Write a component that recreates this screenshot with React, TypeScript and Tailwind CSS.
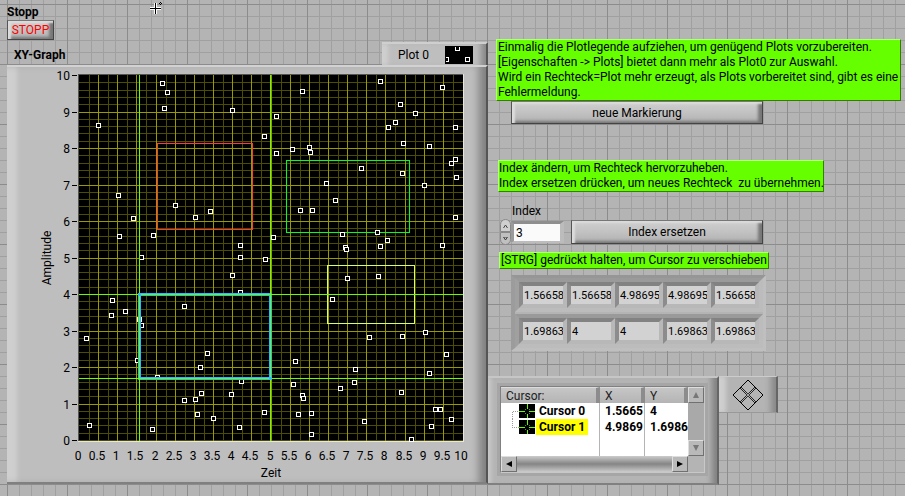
import type { ReactNode } from "react"
import clsx from "clsx"

const points = [
  [162, 83], [167, 92], [164, 108], [232, 110], [98, 125], [380, 81], [302, 91],
  [442, 87], [400, 104], [276, 116], [415, 113], [395, 122], [388, 127], [455, 127],
  [264, 136], [403, 143], [429, 146], [276, 153], [292, 149], [309, 147], [310, 152],
  [361, 168], [451, 163], [455, 159], [118, 195], [133, 218], [119, 236], [153, 235],
  [141, 257], [175, 205], [195, 217], [210, 211], [240, 245], [240, 257], [232, 275],
  [240, 292], [265, 259], [273, 237], [112, 300], [184, 306], [402, 173], [326, 183],
  [424, 185], [456, 177], [335, 200], [300, 210], [312, 210], [455, 217], [342, 234],
  [377, 232], [387, 240], [380, 246], [345, 247], [346, 249], [442, 245], [347, 278],
  [378, 276], [332, 299], [125, 311], [111, 315], [139, 319], [141, 325], [86, 338],
  [137, 360], [207, 353], [200, 367], [157, 377], [241, 381], [201, 393], [231, 394],
  [184, 400], [195, 399], [197, 414], [213, 418], [264, 412], [89, 425], [152, 429],
  [239, 427], [369, 337], [402, 336], [425, 332], [446, 354], [295, 361], [355, 369],
  [354, 382], [429, 373], [293, 384], [340, 388], [401, 392], [302, 395], [303, 398],
  [298, 414], [311, 413], [311, 434], [364, 421], [435, 409], [440, 409], [451, 419],
  [431, 426], [411, 439],
]

const xLabels = Array.from({ length: 21 }, (_, i) => i / 2)
const yLabels = Array.from({ length: 11 }, (_, i) => i)

const toX = (v: number) => Math.round(79 + v * 38.3)
const toY = (v: number) => Math.round(440 - v * 36.5)

const arrayRows = [
  ["1.56658", "1.56658", "4.98695", "4.98695", "1.56658"],
  ["1.69863", "4", "4", "1.69863", "1.69863"],
]

const cursors = [
  { name: "Cursor 0", x: "1.5665", y: "4", active: false, tree: "M1.5 16V8.5H8" },
  { name: "Cursor 1", x: "4.9869", y: "1.6986", active: true, tree: "M1.5 0v8.500H8" },
]

function Graph() {
  return (
    <svg
      viewBox="27 69 440 412"
      className="block h-auto w-full overflow-visible fill-black text-xs"
      shapeRendering="crispEdges"
      role="img"
      aria-label="XY-Graph"
    >
      <rect x="78" y="74" width="386" height="368" fill="#e6e6e6" />
      <rect x="78" y="74" width="385" height="367" fill="#555" />
      <rect x="79" y="75" width="384" height="366" fill="#000" />

      {/* minor grid */}
      {Array.from({ length: 20 }, (_, i) => (
        <rect key={i} x={toX(i / 2) + 10} y="75" width="1" height="366" fill="#4d4d00" />
      ))}
      {Array.from({ length: 50 }, (_, i) => (
        <rect key={i} x="79" y={toY(i / 5)} width="384" height="1" fill="#4d4d00" />
      ))}

      {/* major grid */}
      {xLabels.slice(1, 20).map((v) => (
        <rect key={v} x={toX(v)} y="75" width="1" height="366" fill="#999900" />
      ))}
      {yLabels.slice(1, 10).map((v) => (
        <rect key={v} x="79" y={toY(v)} width="384" height="1" fill="#999900" />
      ))}

      {/* marked rectangles */}
      <g fill="none">
        <rect x="157.5" y="143.5" width="95" height="86" stroke="#ff3b3b" />
        <rect x="286.5" y="160.5" width="123" height="72" stroke="#00ff21" />
        <rect x="327.5" y="265.5" width="87" height="58" stroke="#d9ff66" />
      </g>

      {points.map(([x, y], i) => (
        <rect key={i} x={x - 1.5} y={y - 1.5} width="4" height="4" fill="#000" stroke="#fff" />
      ))}

      <rect x="139.5" y="294.5" width="131" height="84" fill="none" stroke="#33b5ff" strokeWidth="3" />

      {/* cursor lines */}
      <g fill="#66ff00">
        <rect x="139" y="75" width="1" height="366" />
        <rect x="79" y="294" width="384" height="1" />
        <rect x="270" y="75" width="1" height="366" />
        <rect x="79" y="378" width="384" height="1" />
      </g>
      <rect x="138" y="293" width="3" height="3" fill="#33b5ff" />
      <rect x="269" y="377" width="3" height="3" fill="#33b5ff" />

      {yLabels.map((v) => (
        <g key={v}>
          <rect x="72" y={toY(v)} width="5" height="1" />
          <text x="70" y={toY(v) + 5} textAnchor="end">
            {v}
          </text>
        </g>
      ))}
      {xLabels.map((v) => (
        <text key={v} x={toX(v) - 1} y="460" textAnchor="middle">
          {v}
        </text>
      ))}
      <text x="271" y="477" textAnchor="middle">
        Zeit
      </text>
      <text transform="translate(51 258) rotate(-90)" textAnchor="middle">
        Amplitude
      </text>
    </svg>
  )
}

function Note({ children, className }: { children: ReactNode; className?: string }) {
  return (
    <p
      className={clsx(
        "border border-t-[#b3ff80] border-r-[#338000] border-b-[#338000] border-l-[#b3ff80] bg-[#66ff00] leading-[15px] whitespace-pre",
        className,
      )}
    >
      {children}
    </p>
  )
}

function PanelButton({ children, className }: { children: ReactNode; className?: string }) {
  return (
    <button
      type="button"
      className={clsx(
        "border border-t-[#777] border-r-[#444] border-b-[#444] border-l-[#555] bg-linear-to-b from-[#cfcfcf] via-[#c2c2c2] to-[#b0b0b0] text-center shadow-[inset_3px_2px_2px_#dcdcdc,inset_-4px_-2px_3px_#777]",
        className,
      )}
    >
      {children}
    </button>
  )
}

function ScrollButton({ label, d, muted }: { label: string; d: string; muted?: boolean }) {
  return (
    <button
      type="button"
      aria-label={label}
      className="flex size-4 shrink-0 items-center justify-center border border-t-[#dedede] border-r-[#707070] border-b-[#707070] border-l-[#dedede] bg-[#b9b9b9]"
    >
      <svg viewBox="0 0 8 8" className={clsx("size-2", muted ? "fill-[#777]" : "fill-black")}>
        <path d={d} />
      </svg>
    </button>
  )
}

function CursorGlyph({ tree }: { tree: string }) {
  return (
    <svg viewBox="0 0 24 16" className="ml-2.5 block h-4 w-6" shapeRendering="crispEdges">
      <path d={tree} fill="none" stroke="#999" strokeDasharray="1 1" />
      <rect x="8" y="1" width="16" height="14" fill="#000" />
      <path d="M8 8.500h6M18 8.500h6M16.500 1v5M16.500 11v4" stroke="#66ff00" fill="none" />
      <path d="M14 6h1v1h-1zM18 6h1v1h-1zM14 10h1v1h-1zM18 10h1v1h-1z" fill="#4d9900" />
    </svg>
  )
}

function CursorLegend() {
  const head =
    "h-4 border-t border-r-4 border-t-[#dcdcdc] border-r-[#8c8c8c] bg-linear-to-b from-[#c6c6c6] to-[#b4b4b4] p-0 text-left leading-[14px] font-normal text-[#222]"
  return (
    <section
      aria-label="Cursor"
      className="w-[231px] border-t-2 border-r-2 border-b-2 border-t-[#c6c6c6] border-r-[#666] border-b-[#808080] bg-[#b4b4b4] pt-2 pr-3 pb-2.5 pl-3 shadow-[inset_-9px_0_6px_-4px_#808080,inset_5px_0_4px_-2px_#cacaca]"
    >
      <div className="flex border border-t-[#808080] border-r-[#c8c8c8] border-b-[#c8c8c8] border-l-[#808080] shadow-[0_0_0_3px_#a6a6a6]">
        <div className="min-w-0 flex-1">
          <div className="h-[69px] overflow-hidden bg-white">
            <table className="w-full table-fixed border-separate border-spacing-0">
              <thead>
                <tr>
                  <th className={clsx(head, "w-[99px] pl-[5px]")}>Cursor:</th>
                  <th className={clsx(head, "w-[45px] pl-[5px]")}>X</th>
                  <th className={clsx(head, "pl-[5px]")}>Y</th>
                </tr>
              </thead>
              <tbody className="font-bold">
                {cursors.map((c) => (
                  <tr key={c.name}>
                    <td className="border-r border-[#b4b4b4] p-0">
                      <div className="flex h-4 items-center">
                        <CursorGlyph tree={c.tree} />
                        <span className={clsx("ml-px px-[3px] leading-4", c.active && "bg-[#ffff00]")}>
                          {c.name}
                        </span>
                      </div>
                    </td>
                    <td className="border-r border-[#b4b4b4] p-0 pl-[5px] leading-4">{c.x}</td>
                    <td className="p-0 pl-[5px] leading-4">{c.y}</td>
                  </tr>
                ))}
                <tr className="h-6">
                  <td className="border-r border-[#b4b4b4]" />
                  <td className="border-r border-[#b4b4b4]" />
                  <td />
                </tr>
              </tbody>
            </table>
          </div>
          <div className="flex">
            <ScrollButton label="Nach links" d="M7 1v6L1 4z" />
            <div className="flex-1 bg-linear-to-b from-[#cccccc] via-[#858585] to-[#cccccc]" />
            <ScrollButton label="Nach rechts" d="M1 1v6l6-3z" />
          </div>
        </div>
        <div className="flex h-[69px] flex-col justify-between bg-[#a9a9a9]">
          <ScrollButton label="Nach oben" d="M4 1l3 6H1z" muted />
          <ScrollButton label="Nach unten" d="M1 1h6L4 7z" muted />
        </div>
      </div>
    </section>
  )
}

export default function App() {
  return (
    <main className="relative min-h-screen overflow-hidden bg-[#b4b4b4] bg-[linear-gradient(#8c8c8c_1px,transparent_1px),linear-gradient(90deg,#8c8c8c_1px,transparent_1px),linear-gradient(#a0a0a0_1px,transparent_1px),linear-gradient(90deg,#a0a0a0_1px,transparent_1px)] bg-size-[60px_60px,60px_60px,12px_12px,12px_12px] bg-position-[7px_4px] font-['Roboto','Open_Sans',sans-serif] text-xs text-black">
      <svg viewBox="0 0 14 14" className="absolute top-0.5 left-[149px] size-3.5" shapeRendering="crispEdges">
        <path d="M6.5 1v11M1 6.5h11" stroke="#fff" strokeWidth="3" />
        <path d="M6.5 1v11M1 6.5h11" stroke="#000" />
        <path d="M11 0h1v1h-1zM10 1h1v1h-1zM12 1h1v1h-1zM11 2h1v1h-1z" />
      </svg>

      <div className="grid grid-cols-[minmax(0,488fr)_minmax(0,417fr)]">
        <div className="pl-[7px]">
          <div className="h-[42px] pt-1">
            <h2 className="leading-4 font-bold">Stopp</h2>
            <PanelButton className="block h-5 w-[47px] leading-[18px] text-[#ff0000]">STOPP</PanelButton>
          </div>

          <div className="flex h-[23px] items-end justify-between">
            <h2 className="pb-0.5 pl-[7px] leading-4 font-bold">XY-Graph</h2>
            <div className="flex h-[23px] w-[106px] items-center justify-between border-t-2 border-r-2 border-t-[#cfcfcf] border-r-[#555] bg-[#bebebe] pr-[13px] pl-4 shadow-[inset_-9px_0_6px_-4px_#888,inset_8px_0_4px_-2px_#cfcfcf]">
              <span>Plot 0</span>
              <svg viewBox="0 0 28 18" className="h-[18px] w-7" shapeRendering="crispEdges">
                <rect width="28" height="18" />
                <g fill="none" stroke="#fff">
                  <path d="M10.5 1v3.500h4V1" />
                  <path d="M1 11.500h2.500v4H1" />
                  <rect x="20.500" y="11.500" width="4" height="4" />
                </g>
              </svg>
            </div>
          </div>

          <section
            aria-label="XY-Graph"
            className="border-t-2 border-r-2 border-b-2 border-t-[#d2d2d2] border-r-[#555] border-b-[#808080] bg-[#bebebe] pt-0.5 pr-[19px] pb-px pl-5 shadow-[inset_-11px_0_8px_-4px_#808080,inset_12px_0_4px_-2px_#cfcfcf]"
          >
            <Graph />
          </section>
        </div>

        <div className="pt-[39px]">
          <div className="pl-2">
            <Note className="w-[405px] pl-px">
              Einmalig die Plotlegende aufziehen, um genügend Plots vorzubereiten.
              {"\n"}[Eigenschaften -&gt; Plots] bietet dann mehr als Plot0 zur Auswahl.
              {"\n"}Wird ein Rechteck=Plot mehr erzeugt, als Plots vorbereitet sind, gibt es eine
              {"\n"}Fehlermeldung.
            </Note>
            <PanelButton className="ml-[15px] block h-[23px] w-[252px]">neue Markierung</PanelButton>

            <Note className="mt-9 ml-0.5 w-[326px]">
              Index ändern, um Rechteck hervorzuheben.
              {"\n"}Index ersetzen drücken, um neues Rechteck{"  "}zu übernehmen.
            </Note>

            <label htmlFor="index" className="mt-[11px] block pl-4 leading-4">
              Index
            </label>
            <div className="mt-px flex h-6 items-center">
              <div className="ml-1 flex w-[11px] flex-col">
                <button
                  type="button"
                  aria-label="Index erhöhen"
                  className="flex h-[13px] items-center justify-center rounded-t-full border border-[#888] bg-[#cfcfcf]"
                >
                  <svg viewBox="0 0 5 4" className="h-1 w-[5px] fill-none stroke-[#444]">
                    <path d="M.5 4l2-3 2 3" />
                  </svg>
                </button>
                <button
                  type="button"
                  aria-label="Index verringern"
                  className="flex h-[13px] items-center justify-center rounded-b-full border border-[#888] bg-[#c0c0c0]"
                >
                  <svg viewBox="0 0 5 4" className="h-1 w-[5px] fill-none stroke-[#444]">
                    <path d="M.5 0h4l-2 3z" />
                  </svg>
                </button>
              </div>
              <input
                id="index"
                defaultValue="3"
                className="h-[22px] w-[53px] border-t-[3px] border-r-4 border-b-2 border-l-[3px] border-t-[#8e8e8e] border-r-[#bcbcbc] border-b-[#bcbcbc] border-l-[#9a9a9a] bg-[#fafafa] px-0.5"
              />
              <PanelButton className="ml-[7px] h-6 w-[192px]">Index ersetzen</PanelButton>
            </div>

            <Note className="mt-2 ml-[3px] w-[270px] pl-px">[STRG] gedrückt halten, um Cursor zu verschieben</Note>

            <div className="mt-1.5 ml-[15px] w-fit space-y-0.5 border-t-[3px] border-r-[3px] border-b-[3px] border-l-4 border-t-[#969696] border-r-[#bfbfbf] border-b-[#bfbfbf] border-l-[#9c9c9c] bg-[#b4b4b4]">
              {arrayRows.map((row, r) => (
                <div
                  key={r}
                  className="flex w-fit border-4 border-t-[#9a9a9a] border-r-[#bcbcbc] border-b-[#bcbcbc] border-l-[#a0a0a0]"
                >
                  {row.map((value, c) => (
                    <input
                      key={c}
                      readOnly
                      value={value}
                      aria-label={`Zeile ${r + 1}, Spalte ${c + 1}`}
                      className="h-[26px] w-12 border-4 border-t-[#828282] border-r-[#b8b8b8] border-b-[#b8b8b8] border-l-[#8c8c8c] bg-[#d2d2d2] pl-px text-[11px]"
                    />
                  ))}
                </div>
              ))}
            </div>
          </div>

          <div className="mt-[25px] flex items-start">
            <CursorLegend />
            <div className="flex h-[37px] w-[59px] items-center justify-center border-t border-r-2 border-b border-t-[#cccccc] border-r-[#666] border-b-[#999] bg-[#b4b4b4] shadow-[inset_-9px_0_6px_-4px_#888,inset_9px_0_4px_-2px_#cfcfcf]">
              <svg viewBox="0 0 32 32" className="size-8 fill-none stroke-black">
                <path d="M16 1l15 15-15 15L1 16z" />
                <path d="M9 8l15 15M8 9l15 15M23 8L8 23M24 9L9 24" strokeWidth="0.8" />
                <path d="M16 14.500l1.500 1.500-1.500 1.500-1.500-1.500z" className="fill-[#b4b4b4] stroke-none" />
              </svg>
            </div>
          </div>
        </div>
      </div>
    </main>
  )
}
